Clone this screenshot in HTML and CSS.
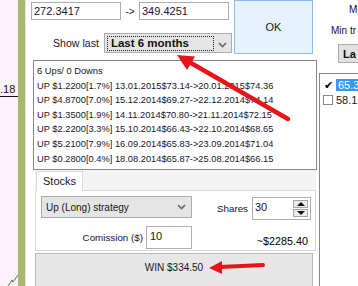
FILE: index.html
```html
<!DOCTYPE html>
<html lang="en">
<head>
	<meta charset="UTF-8">
	<title>Backtest</title>
	<link rel="stylesheet" href="styles.css">
</head>
<body>
	<div class="app">
		<div class="chart">
			<div class="tick">.18</div>
			<svg class="trend" width="18" height="16" viewBox="0 0 18 16">
				<polyline points="8,16 12,10 13,12 18,5" fill="none" stroke="#2c8a2c" stroke-width="1"/>
			</svg>
		</div>
		<div class="bar"></div>

		<div class="main">
			<div class="top">
				<div class="top-left">
					<div class="range">
						<div class="field">272.3417</div>
						<span class="to">-&gt;</span>
						<div class="field">349.4251</div>
					</div>
					<div class="show">
						<span class="show-label">Show last</span>
						<div class="combo">
							<span class="combo-value">Last 6 months</span>
							<span class="combo-arrow">
								<svg width="9" height="6" viewBox="0 0 9 6"><polyline points="1,1 4.5,4.5 8,1" fill="none" stroke="#666" stroke-width="1.6"/></svg>
							</span>
						</div>
					</div>
				</div>
				<button class="ok">OK</button>
			</div>

			<div class="results">
				<div>6 Ups/ 0 Downs</div>
				<div>UP $1.2200[1.7%] 13.01.2015$73.14-&gt;20.01.2015$74.36</div>
				<div>UP $4.8700[7.0%] 15.12.2014$69.27-&gt;22.12.2014$74.14</div>
				<div>UP $1.3500[1.9%] 14.11.2014$70.80-&gt;21.11.2014$72.15</div>
				<div>UP $2.2200[3.3%] 15.10.2014$66.43-&gt;22.10.2014$68.65</div>
				<div>UP $5.2100[7.9%] 16.09.2014$65.83-&gt;23.09.2014$71.04</div>
				<div>UP $0.2800[0.4%] 18.08.2014$65.87-&gt;25.08.2014$66.15</div>
			</div>

			<div class="tabs">
				<div class="strip">
					<div class="tab">Stocks</div>
				</div>
				<div class="panel">
					<div class="row">
						<div class="strategy">
							<span>Up (Long) strategy</span>
							<svg width="9" height="6" viewBox="0 0 9 6"><polyline points="1,1 4.5,4.5 8,1" fill="none" stroke="#666" stroke-width="1.6"/></svg>
						</div>
						<div class="row-right">
							<span class="lbl">Shares</span>
							<div class="spin">
								<span class="spin-value">30</span>
								<div class="spin-btns">
									<span class="spin-btn"><i class="up"></i></span>
									<span class="spin-btn"><i class="down"></i></span>
								</div>
							</div>
						</div>
					</div>
					<div class="row row2">
						<div class="fee">
							<span class="lbl">Comission ($)</span>
							<div class="fee-field">10</div>
						</div>
						<div class="row-right">
							<span class="total">~$2285.40</span>
						</div>
					</div>
				</div>
			</div>

			<button class="win">WIN $334.50</button>
		</div>

		<!-- right column, cut off by the window edge -->
		<div class="side">
			<div class="side-max">M</div>
			<div class="side-min">Min tr</div>
			<button class="side-btn">La</button>
			<div class="checks">
				<div class="check-item"><span class="box on">&#10004;</span><span class="sel">65.3</span></div>
				<div class="check-item"><span class="box"></span><span>58.1</span></div>
			</div>
		</div>

		<svg class="arrows" width="358" height="286" viewBox="0 0 358 286">
			<line x1="288" y1="119" x2="191" y2="63" stroke="#e8141b" stroke-width="4.5" stroke-linecap="round"/>
			<polygon points="177,55 195,56.5 187,70" fill="#e8141b"/>
			<line x1="263" y1="265" x2="220" y2="267" stroke="#e8141b" stroke-width="4" stroke-linecap="round"/>
			<polygon points="209,268 222,261 222,274" fill="#e8141b"/>
		</svg>
	</div>
</body>
</html>
```

FILE: styles.css
```css
*{
	box-sizing: border-box;
}
body{
	margin: 0;
	width: 358px;
	height: 286px;
	overflow: hidden;
	background: #fff;
	font-family: "Liberation Sans", Arial, sans-serif;
	font-size: 10px;
	color: #16162a;
}
.app{
	position: relative;
	display: flex;
	height: 286px;
}

/* chart strip on the left */
.chart{
	width: 18px;
	background: #fdf1fb;
	display: flex;
	flex-direction: column;
	padding-top: 83px;
}
.tick{
	height: 14px;
	border-bottom: 1px solid #111;
	text-align: right;
	padding-right: 3px;
	font-size: 11px;
	line-height: 13px;
	color: #111;
}
.trend{
	margin-top: auto;
	display: block;
}
.bar{
	width: 7px;
	background: #a7b96c;
}

/* main dialog */
.main{
	width: 293px;
	border-left: 1px solid #e4e4e4;
	padding-left: 5px;
}
.top{
	display: flex;
	height: 54px;
}
.top-left{
	width: 201px;
	padding-top: 2px;
}
.range{
	display: flex;
	align-items: center;
}
.field{
	width: 90px;
	height: 18px;
	border: 1px solid #abadb3;
	padding-left: 2px;
	font-size: 11px;
	line-height: 16px;
}
.to{
	width: 18px;
	text-align: center;
	font-size: 10px;
}
.show{
	display: flex;
	align-items: center;
	margin-top: 13px;
}
.show-label{
	margin-left: 22px;
	font-size: 10.6px;
}
.combo{
	display: flex;
	align-items: center;
	margin-left: 5px;
	width: 128px;
	height: 20px;
	border: 1px solid #adadad;
	background: #e5e5e5;
	padding-left: 2px;
}
.combo-value{
	width: 107px;
	height: 15px;
	border: 1px dotted #222;
	padding-left: 3px;
	font-weight: bold;
	font-size: 11.5px;
	line-height: 13px;
	color: #111;
}
.combo-arrow{
	flex: 1;
	text-align: center;
	padding-top: 2px;
}
.ok{
	margin-left: 2px;
	width: 79px;
	height: 54px;
	border: 1px solid #8cbcec;
	background: #e5f1fb;
	font-family: "Liberation Sans", Arial, sans-serif;
	font-size: 11px;
	color: #222;
	padding: 0;
}

.results{
	margin: 6px 0 0 2px;
	width: 284px;
	height: 110px;
	border: 1px solid #828790;
	padding: 3px 0 0 3px;
	font-size: 9.3px;
	line-height: 14.6px;
	white-space: nowrap;
}

/* tab control */
.tabs{
	margin-left: 4px;
	width: 281px;
}
.strip{
	height: 20px;
	background: #f4f4f4;
	padding: 1px 0 0 1px;
	display: flex;
}
.tab{
	width: 47px;
	height: 20px;
	border: 1px solid #d9d9d9;
	border-bottom: none;
	background: #fff;
	font-size: 11px;
	line-height: 18px;
	padding-left: 6px;
	position: relative;
	z-index: 1;
}
.panel{
	height: 61px;
	border: 1px solid #d9d9d9;
	padding: 5px 4px 0 5px;
}
.row{
	display: flex;
	align-items: flex-start;
}
.strategy{
	width: 151px;
	height: 22px;
	border: 1px solid #acacac;
	background: #e5e5e5;
	display: flex;
	align-items: center;
	justify-content: space-between;
	padding: 0 5px 0 4px;
	font-size: 10px;
}
.row-right{
	flex: 1;
	display: flex;
	justify-content: flex-end;
	align-items: center;
}
.lbl{
	font-size: 9.8px;
}
.spin{
	margin: 1px 0 0 4px;
	width: 59px;
	height: 23px;
	border: 1px solid #abadb3;
	display: flex;
	padding: 1px 1px 0 2px;
}
.spin-value{
	flex: 1;
	font-size: 11px;
	line-height: 17px;
}
.spin-btns{
	display: flex;
	flex-direction: column;
	gap: 1px;
	padding-top: 1px;
	margin-right: 1px;
}
.spin-btn{
	width: 15px;
	height: 8px;
	border: 1px solid #a6a6a6;
	background: #ececec;
	display: flex;
	align-items: center;
	justify-content: center;
}
.spin-btn i{
	width: 0;
	height: 0;
	border-left: 4px solid transparent;
	border-right: 4px solid transparent;
}
.spin-btn .up{
	border-bottom: 4px solid #111;
}
.spin-btn .down{
	border-top: 4px solid #111;
}
.row2{
	margin-top: 6px;
}
.fee{
	width: 151px;
	display: flex;
	justify-content: flex-end;
	align-items: center;
}
.fee-field{
	margin-left: 3px;
	width: 46px;
	height: 23px;
	border: 1px solid #abadb3;
	padding-left: 3px;
	font-size: 11px;
	line-height: 19px;
}
.row2 .row-right{
	align-self: stretch;
	align-items: flex-end;
	padding-bottom: 2px;
}
.total{
	font-size: 10.8px;
	margin-right: 3px;
	color: #000;
}

.win{
	display: block;
	margin: 2px 0 0 4px;
	width: 278px;
	height: 40px;
	border: 1px solid #b9b9b9;
	background: #e7e7e7;
	font-family: "Liberation Sans", Arial, sans-serif;
	font-size: 10px;
	color: #16162a;
	padding: 0 0 12px 0;
}

/* right column */
.side{
	width: 40px;
	overflow: hidden;
	white-space: nowrap;
	font-size: 10px;
}
.side-max{
	margin: 4px 0 0 31px;
}
.side-min{
	margin: 10px 0 0 13px;
}
.side-btn{
	display: block;
	margin: 8px 0 0 20px;
	width: 20px;
	height: 19px;
	border: 1px solid #adadad;
	border-right: none;
	background: #e1e1e1;
	text-align: left;
	padding: 0 0 0 4px;
	font-family: "Liberation Sans", Arial, sans-serif;
	font-weight: bold;
	font-size: 11px;
	color: #111;
}
.checks{
	margin: 10px 0 0 1px;
	width: 39px;
	height: 220px;
	border: 1px solid #828790;
	border-right: none;
	padding: 4px 0 0 3px;
	font-size: 11px;
}
.check-item{
	display: flex;
	align-items: center;
	height: 14.5px;
}
.box{
	width: 10px;
	height: 10px;
	border: 1px solid #8a8a8a;
	font-size: 9px;
	line-height: 8px;
	text-align: center;
	color: #000;
	margin-right: 3px;
}
.box.on{
	border-color: #fff;
	font-size: 11px;
}
.sel{
	background: #3399ff;
	color: #fff;
	padding: 0 2px;
}

.arrows{
	position: absolute;
	left: 0;
	top: 0;
	pointer-events: none;
}
```
